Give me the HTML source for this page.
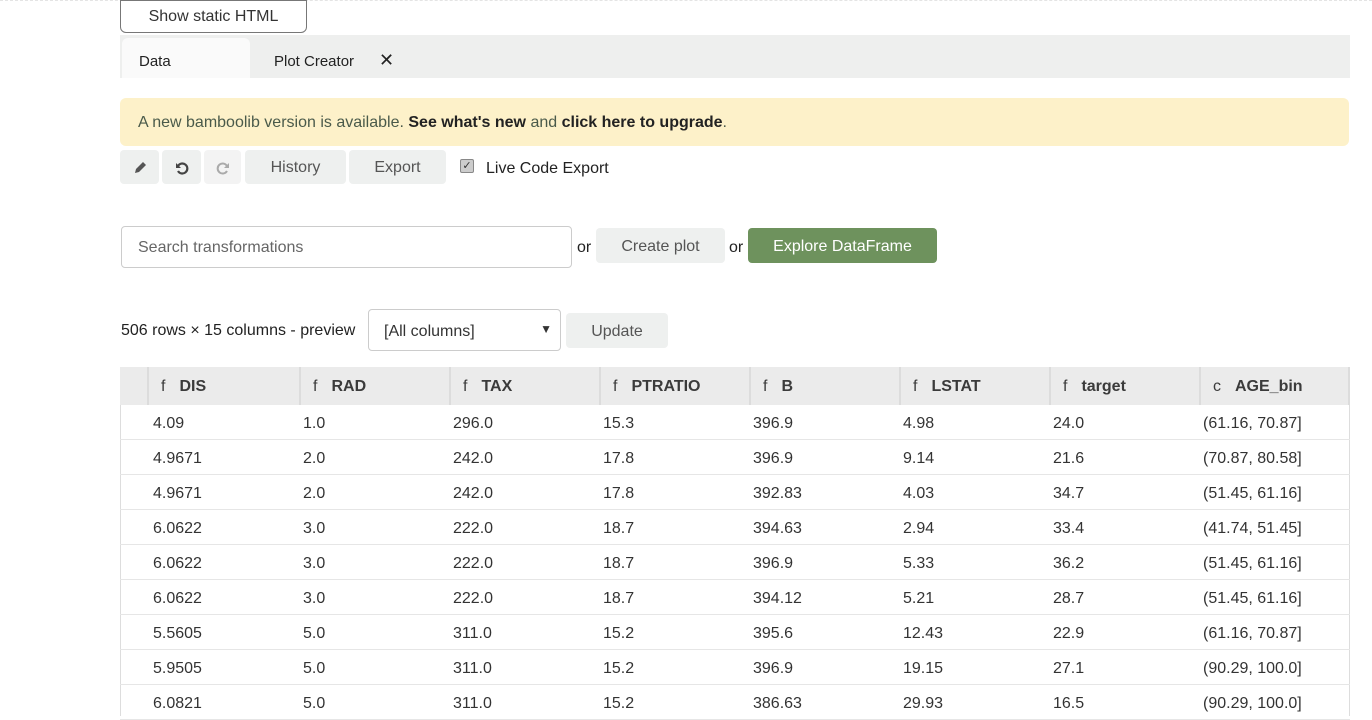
<!DOCTYPE html>
<html><head><meta charset="utf-8"><style>
*{box-sizing:border-box;margin:0;padding:0}
body{width:1372px;height:716px;overflow:hidden;background:#fff;font-family:"Liberation Sans",Arial,sans-serif;color:#333;font-size:15px;position:relative}
.a{position:absolute}
.btn{position:absolute;background:#eef0ef;border-radius:4px;color:#555;font-size:16px;display:flex;align-items:center;justify-content:center;padding-top:2px}
.hd{position:absolute;top:367px;height:38px;background:#ebebeb;border-right:2px solid #dcdcdc;font-weight:bold;font-size:16px;color:#3b3b3b;line-height:40px;padding-left:12px}
.hd i{font-style:normal;margin-right:14px;font-weight:normal}
.row{position:absolute;left:120px;width:1230px;height:35px;border-bottom:1px solid #e6e6e6;font-size:16px}
.row span{position:absolute;top:10px}
</style></head><body>
<div class="a" style="left:0;top:0;width:1372px;height:1px;border-top:1px dashed #e4e4e4"></div>
<div class="a" style="left:120px;top:0;width:187px;height:33px;border:1px solid #777;border-radius:0 0 6px 6px;font-size:16px;display:flex;align-items:center;justify-content:center">Show static HTML</div>
<div class="a" style="left:120px;top:35px;width:1230px;height:43px;background:#eeefee"></div>
<div class="a" style="left:122px;top:38px;width:128px;height:40px;background:#fafafa;border-radius:6px 6px 0 0"></div>
<div class="a" style="left:139px;top:53px;font-size:15px;color:#222">Data</div>
<div class="a" style="left:274px;top:53px;font-size:15px;color:#222">Plot Creator</div>
<div class="a" style="left:379px;top:50px;font-size:18px;color:#222">✕</div>
<div class="a" style="left:120px;top:98px;width:1229px;height:48px;background:#fdf1c9;border-radius:6px;padding:16px 18px;font-size:16px;color:#4a5a4a">A new bamboolib version is available. <b style="color:#222">See what's new</b> and <b style="color:#222">click here to upgrade</b>.</div>
<div class="btn" style="left:120px;top:150px;width:39px;height:34px"><svg width="16" height="16" viewBox="0 0 16 16"><path d="M3 13l1-4 7-7 3 3-7 7z" fill="#555"/></svg></div>
<div class="btn" style="left:162px;top:150px;width:39px;height:34px"><svg width="16" height="16" viewBox="0 0 16 16"><path d="M4 6a5 5 0 1 1 0 5" stroke="#444" stroke-width="2.2" fill="none"/><path d="M2 3v5h5z" fill="#444"/></svg></div>
<div class="btn" style="left:204px;top:150px;width:37px;height:34px;background:#f3f3f3"><svg width="16" height="16" viewBox="0 0 16 16"><path d="M12 6a5 5 0 1 0 0 5" stroke="#aaa" stroke-width="2" fill="none"/><path d="M14 3v5h-5z" fill="#aaa"/></svg></div>
<div class="btn" style="left:245px;top:150px;width:101px;height:34px">History</div>
<div class="btn" style="left:349px;top:150px;width:97px;height:34px">Export</div>
<div class="a" style="left:460px;top:159px;width:14px;height:14px;border:1px solid #888;background:#ccc;border-radius:2px;font-size:11px;line-height:12px;text-align:center;color:#333">✓</div>
<div class="a" style="left:486px;top:160px;font-size:16px;color:#222">Live Code Export</div>
<div class="a" style="left:121px;top:226px;width:451px;height:42px;border:1px solid #ccc;border-radius:4px;padding:12px 16px;font-size:16px;color:#666">Search transformations</div>
<div class="a" style="left:577px;top:239px;font-size:16px;color:#222">or</div>
<div class="btn" style="left:596px;top:228px;width:129px;height:35px">Create plot</div>
<div class="a" style="left:729px;top:239px;font-size:16px;color:#222">or</div>
<div class="btn" style="left:748px;top:228px;width:189px;height:35px;background:#6e925d;color:#fff">Explore DataFrame</div>
<div class="a" style="left:121px;top:322px;font-size:16px;color:#222">506 rows × 15 columns - preview</div>
<div class="a" style="left:368px;top:309px;width:193px;height:42px;border:1px solid #ccc;border-radius:4px;padding:13px 15px;font-size:16px;color:#333">[All columns]<span style="position:absolute;right:8px;top:12px;font-size:12px">▼</span></div>
<div class="btn" style="left:566px;top:313px;width:102px;height:35px">Update</div>
<div class="a" style="left:120px;top:367px;width:1230px;height:38px;background:#ebebeb;border-left:1px solid #ddd"></div>
<div class="hd" style="left:120px;width:29px"></div>
<div class="hd" style="left:149px;width:152px"><i>f</i>DIS</div>
<div class="hd" style="left:301px;width:150px"><i>f</i>RAD</div>
<div class="hd" style="left:451px;width:150px"><i>f</i>TAX</div>
<div class="hd" style="left:601px;width:150px"><i>f</i>PTRATIO</div>
<div class="hd" style="left:751px;width:150px"><i>f</i>B</div>
<div class="hd" style="left:901px;width:150px"><i>f</i>LSTAT</div>
<div class="hd" style="left:1051px;width:150px"><i>f</i>target</div>
<div class="hd" style="left:1201px;width:149px"><i>c</i>AGE_bin</div>
<div class="a" style="left:120px;top:405px;width:1px;height:311px;background:#ddd"></div>
<div class="a" style="left:1349px;top:405px;width:1px;height:311px;background:#ddd"></div>
<div class="row" style="top:405px"><span style="left:33px">4.09</span><span style="left:183px">1.0</span><span style="left:333px">296.0</span><span style="left:483px">15.3</span><span style="left:633px">396.9</span><span style="left:783px">4.98</span><span style="left:933px">24.0</span><span style="left:1083px">(61.16, 70.87]</span></div>
<div class="row" style="top:440px"><span style="left:33px">4.9671</span><span style="left:183px">2.0</span><span style="left:333px">242.0</span><span style="left:483px">17.8</span><span style="left:633px">396.9</span><span style="left:783px">9.14</span><span style="left:933px">21.6</span><span style="left:1083px">(70.87, 80.58]</span></div>
<div class="row" style="top:475px"><span style="left:33px">4.9671</span><span style="left:183px">2.0</span><span style="left:333px">242.0</span><span style="left:483px">17.8</span><span style="left:633px">392.83</span><span style="left:783px">4.03</span><span style="left:933px">34.7</span><span style="left:1083px">(51.45, 61.16]</span></div>
<div class="row" style="top:510px"><span style="left:33px">6.0622</span><span style="left:183px">3.0</span><span style="left:333px">222.0</span><span style="left:483px">18.7</span><span style="left:633px">394.63</span><span style="left:783px">2.94</span><span style="left:933px">33.4</span><span style="left:1083px">(41.74, 51.45]</span></div>
<div class="row" style="top:545px"><span style="left:33px">6.0622</span><span style="left:183px">3.0</span><span style="left:333px">222.0</span><span style="left:483px">18.7</span><span style="left:633px">396.9</span><span style="left:783px">5.33</span><span style="left:933px">36.2</span><span style="left:1083px">(51.45, 61.16]</span></div>
<div class="row" style="top:580px"><span style="left:33px">6.0622</span><span style="left:183px">3.0</span><span style="left:333px">222.0</span><span style="left:483px">18.7</span><span style="left:633px">394.12</span><span style="left:783px">5.21</span><span style="left:933px">28.7</span><span style="left:1083px">(51.45, 61.16]</span></div>
<div class="row" style="top:615px"><span style="left:33px">5.5605</span><span style="left:183px">5.0</span><span style="left:333px">311.0</span><span style="left:483px">15.2</span><span style="left:633px">395.6</span><span style="left:783px">12.43</span><span style="left:933px">22.9</span><span style="left:1083px">(61.16, 70.87]</span></div>
<div class="row" style="top:650px"><span style="left:33px">5.9505</span><span style="left:183px">5.0</span><span style="left:333px">311.0</span><span style="left:483px">15.2</span><span style="left:633px">396.9</span><span style="left:783px">19.15</span><span style="left:933px">27.1</span><span style="left:1083px">(90.29, 100.0]</span></div>
<div class="row" style="top:685px"><span style="left:33px">6.0821</span><span style="left:183px">5.0</span><span style="left:333px">311.0</span><span style="left:483px">15.2</span><span style="left:633px">386.63</span><span style="left:783px">29.93</span><span style="left:933px">16.5</span><span style="left:1083px">(90.29, 100.0]</span></div>
</body></html>
